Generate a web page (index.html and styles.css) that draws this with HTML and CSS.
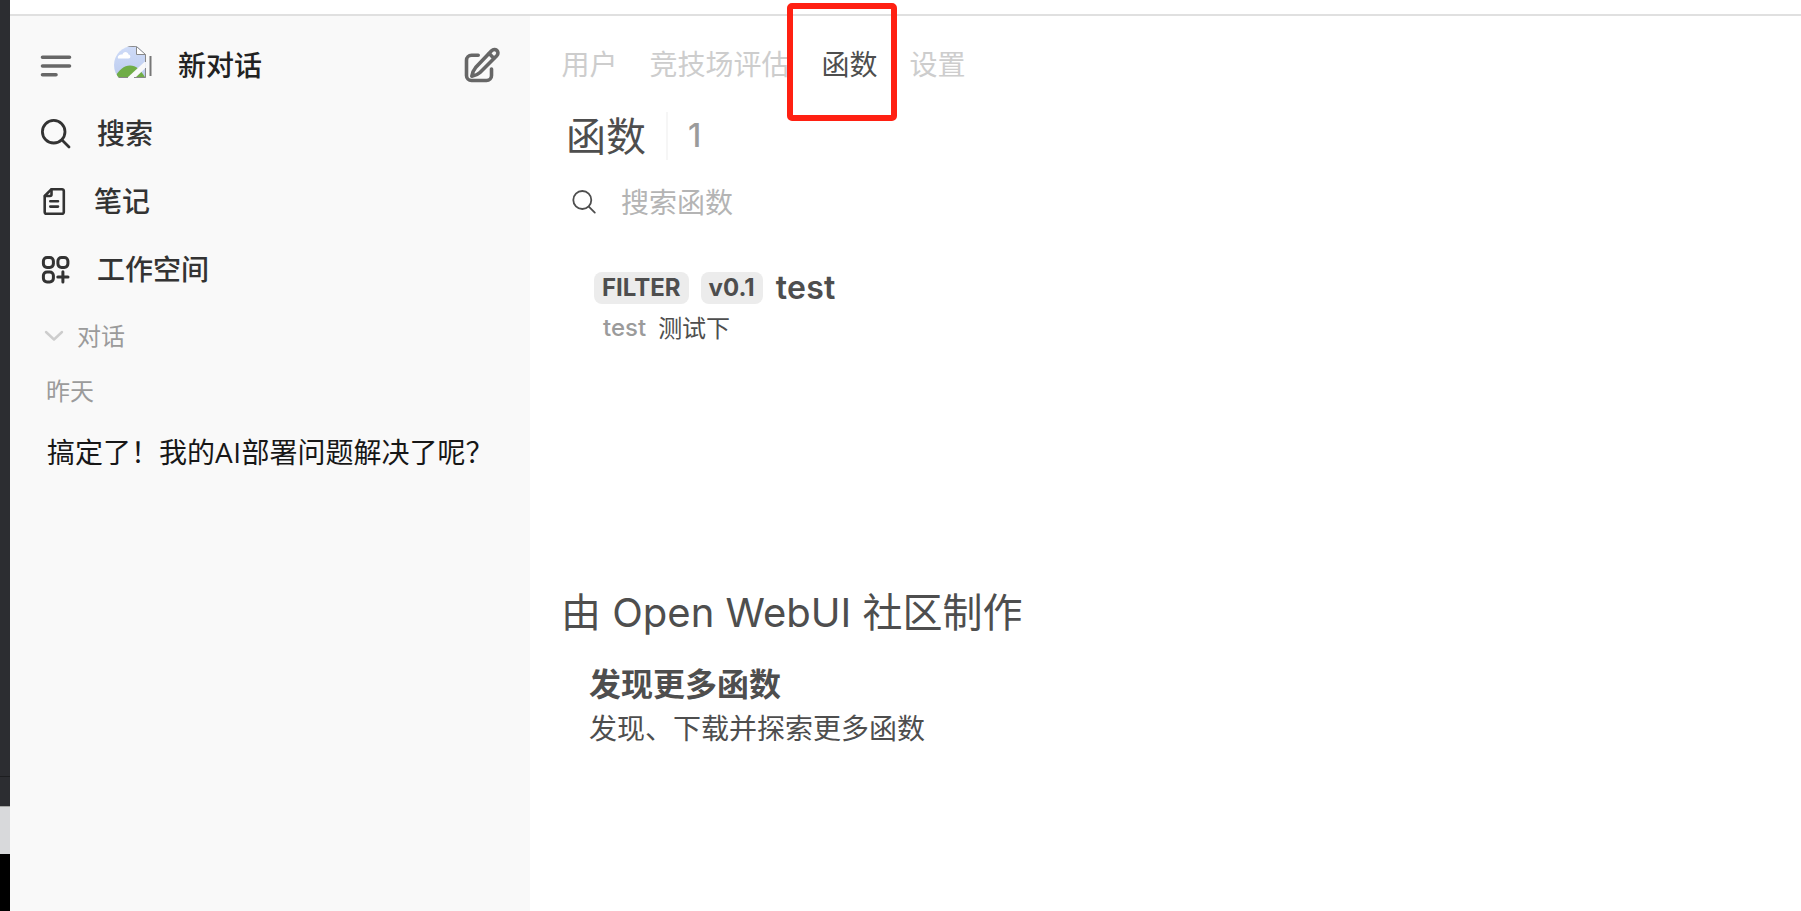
FILE: index.html
```html
<!DOCTYPE html>
<html lang="zh-CN">

<head>
    <meta charset="UTF-8">
    <meta name="viewport" content="width=device-width, initial-scale=1.0">
    <title>函数</title>
    <link rel="stylesheet" href="styles.css">
</head>

<body>
    <div class="edge">
        <div class="edge-dark"></div>
        <div class="edge-dark edge-dark-bottom"></div>
        <div class="edge-light"></div>
    </div>

    <div class="window">
        <div class="topbar"></div>
        <div class="app">
            <!-- Sidebar -->
            <aside class="sidebar">
                <div class="sidebar-header">
                    <svg class="icon-menu" width="32" height="24" viewBox="0 0 32 24" fill="none" stroke="currentColor" stroke-width="3.6" stroke-linecap="round">
                        <path d="M2.5 3.3H29.5M2.5 12H29.5M2.5 20.7H16" />
                    </svg>
                    <svg class="avatar" width="38" height="38" viewBox="0 0 38 38">
                        <defs>
                            <clipPath id="round"><circle cx="19" cy="19" r="19" /></clipPath>
                            <linearGradient id="sky" x1="0" y1="0" x2="0" y2="1">
                                <stop offset="0" stop-color="#cfdcf8" />
                                <stop offset="1" stop-color="#bccbee" />
                            </linearGradient>
                        </defs>
                        <g clip-path="url(#round)">
                            <path d="M0 0H23L31.5 8.5V32H0Z" fill="url(#sky)" />
                            <path d="M4 12.5C3 9 7 8 8.5 8.5C9 5 14 5 14.5 8.5C17 9 17 12.500 14.5 12.5Z" fill="#fff" />
                            <path d="M0 32C5 24 10 19.5 16 19.5C22 19.5 27 24 31.5 32Z" fill="#70ad47" />
                            <path d="M13 32L31.5 15V22L21 32Z" fill="#f9f9f9" />
                            <path d="M22.5 .5V8.5H31.5Z" fill="#fff" stroke="#888" />
                            <path d="M0 .5H22.5M31.5 8.5V16M31.5 22V31.5H20M0 31.5H14" fill="none" stroke="#888" />
                        </g>
                        <path d="M36.500 10V30" stroke="#777" stroke-width="2" />
                    </svg>
                    <span class="new-chat">新对话</span>
                    <svg class="icon-edit" width="37" height="37" viewBox="0 0 37 37" fill="none" stroke="currentColor" stroke-width="3.6" stroke-linecap="round" stroke-linejoin="round">
                        <path d="M14.2 8.2H7.5A5 5 0 0 0 2.5 13.2V28.5A5 5 0 0 0 7.5 33.5H22.5A5 5 0 0 0 27.5 28.5V22" />
                        <path d="M27.8 3.6A3.3 3.3 0 0 1 33 8.4L16 25.4C13.5 27.8 10.5 28.6 7.8 29.2C8.3 26.2 9.3 23.2 11.6 20.6Z" />
                        <path d="M25.2 6.6L29.8 11.2" />
                    </svg>
                </div>

                <nav class="menu">
                    <a class="menu-item">
                        <svg width="32" height="32" viewBox="0 0 32 32" fill="none" stroke="currentColor" stroke-width="2.8" stroke-linecap="round">
                            <circle cx="13.7" cy="13.7" r="11.3" />
                            <path d="M22 22L29 29" />
                        </svg>
                        <span>搜索</span>
                    </a>
                    <a class="menu-item menu-item-notes">
                        <svg width="32" height="32" viewBox="0 0 32 32" fill="none" stroke="currentColor" stroke-width="2.6" stroke-linecap="round" stroke-linejoin="round">
                            <path d="M11.500 3.200H22A1.800 1.800 0 0 1 23.8 5V26A1.8 1.8 0 0 1 22 27.8H6.5A1.8 1.8 0 0 1 4.700 26V10Z" />
                            <path d="M11.5 3.5V8.5A1.5 1.5 0 0 1 10 10H5M10.3 15.3H18M10.3 20.6H18" />
                        </svg>
                        <span>笔记</span>
                    </a>
                    <a class="menu-item">
                        <svg width="32" height="32" viewBox="0 0 32 32" fill="none" stroke="currentColor" stroke-width="3" stroke-linecap="round">
                            <rect x="3.4" y="3.4" width="10" height="10" rx="3.6" />
                            <rect x="17.9" y="3.4" width="10" height="10" rx="3.6" />
                            <rect x="3.4" y="17.9" width="10" height="10" rx="3.6" />
                            <path d="M22.9 17.7V28M17.8 22.9H28" />
                        </svg>
                        <span>工作空间</span>
                    </a>
                </nav>

                <div class="folder">
                    <svg width="20" height="14" viewBox="0 0 20 14" fill="none" stroke="currentColor" stroke-width="2.4" stroke-linecap="round" stroke-linejoin="round">
                        <path d="M2 3L10 10.5L18 3" />
                    </svg>
                    <span>对话</span>
                </div>
                <div class="date">昨天</div>
                <a class="chat">搞定了！我的<span class="latin">AI</span>部署问题解决了呢？</a>
            </aside>

            <!-- Admin content -->
            <main class="content">
                <nav class="tabs">
                    <a>用户</a>
                    <a>竞技场评估</a>
                    <a class="active">函数</a>
                    <a>设置</a>
                </nav>

                <div class="title">
                    <h1>函数</h1>
                    <span class="count">1</span>
                </div>

                <div class="search">
                    <svg width="26" height="26" viewBox="0 0 26 26" fill="none" stroke="currentColor" stroke-width="1.8" stroke-linecap="round">
                        <circle cx="11.300" cy="11" r="9" />
                        <path d="M17.8 17.6L23.8 23.6" />
                    </svg>
                    <span>搜索函数</span>
                </div>

                <div class="function">
                    <div class="function-name">
                        <span class="badge">FILTER</span>
                        <span class="badge">v0.1</span>
                        <strong>test</strong>
                    </div>
                    <div class="function-info">
                        <span class="function-id">test</span>
                        <span>测试下</span>
                    </div>
                </div>

                <section class="community">
                    <h2>由 Open WebUI 社区制作</h2>
                    <div class="discover">
                        <h3>发现更多函数</h3>
                        <p>发现、下载并探索更多函数</p>
                    </div>
                </section>
            </main>
        </div>
    </div>

    <div class="highlight"></div>
</body>

</html>
```

FILE: styles.css
```css
* {
    box-sizing: border-box;
}

body {
    display: flex;
    height: 100vh;
    margin: 0;
    overflow: hidden;
    background-color: #fff;
    font-family: Inter, "Noto Sans CJK SC", sans-serif;
    font-size: 28px;
    color: #4e4e4e;
}

h1,
h2,
h3,
p {
    margin: 0;
    font-weight: 400;
}

svg {
    display: block;
    flex-shrink: 0;
}

/* Strip of the desktop left of the window */
.edge {
    width: 10px;
    background-color: #000;
}

.edge-dark {
    height: 776px;
    background-color: #2c2d31;
}

.edge-dark-bottom {
    height: 30px;
    border-top: 1px solid #1d1e20;
}

.edge-light {
    height: 48px;
    background-color: #d8d9db;
    border-top: 1px solid #a5a6a4;
}

.window {
    flex: 1;
    display: flex;
    flex-direction: column;
}

.topbar {
    height: 16px;
    border-bottom: 2px solid #e0e0e0;
}

.app {
    flex: 1;
    display: flex;
}

/* Sidebar */
.sidebar {
    width: 520px;
    padding: 15px 29px 0 30px;
    background-color: #f9f9f9;
    color: #333;
}

.sidebar-header {
    display: flex;
    align-items: center;
    height: 68px;
    color: #676767;
}

.icon-menu {
    margin-top: 2px;
}

.avatar {
    margin-left: 42px;
}

.new-chat {
    margin-left: 26px;
    padding-bottom: 3px;
    font-weight: 500;
    color: #222;
}

.icon-edit {
    margin-left: auto;
}

.menu-item {
    display: flex;
    align-items: center;
    gap: 25px;
    height: 68px;
    font-weight: 500;
}

.menu-item svg {
    margin-top: 2px;
}

.menu-item span {
    padding-bottom: 2px;
}

.menu-item-notes {
    gap: 22px;
}

.folder {
    display: flex;
    align-items: center;
    gap: 13px;
    height: 66px;
    padding-left: 4px;
    font-size: 24px;
    color: #9b9b9b;
}

.folder svg {
    color: #cdcdcd;
}

.folder span {
    padding-bottom: 3px;
}

.date {
    height: 46px;
    padding-left: 6px;
    font-size: 24px;
    line-height: 46px;
    color: #9b9b9b;
}

.chat {
    display: block;
    height: 74px;
    padding-left: 7px;
    line-height: 74px;
    white-space: nowrap;
    color: #171717;
}

.latin {
    font-family: "Open Sans", sans-serif;
    letter-spacing: 0.5px;
}

/* Content */
.content {
    flex: 1;
    padding: 15px 32px 0;
}

.tabs {
    display: flex;
    align-items: center;
    gap: 32px;
    height: 68px;
    padding-bottom: 4px;
    color: #cdcdcd;
}

.tabs a {
    position: relative;
    left: -0.5px;
}

.tabs .active {
    color: #4e4e4e;
}

.title {
    display: flex;
    align-items: center;
    height: 74px;
    padding-left: 4px;
}

.title h1 {
    padding-bottom: 4px;
    font-size: 40px;
}

.count {
    height: 48px;
    margin-left: 20px;
    padding-left: 20px;
    border-left: 2px solid #f6f6f6;
    font-size: 32px;
    font-weight: 500;
    line-height: 48px;
    color: #9b9b9b;
}

.search {
    display: flex;
    align-items: center;
    gap: 24px;
    height: 58px;
    padding-left: 9px;
}

.search span {
    padding-bottom: 3px;
    color: #b4b4b4;
}

.function {
    padding: 38px 0 0 32px;
}

.function-name {
    display: flex;
    align-items: center;
    gap: 12px;
    height: 37px;
}

.badge {
    height: 32px;
    padding: 0 8px;
    border-radius: 8px;
    background-color: #ececec;
    font-size: 24px;
    font-weight: 700;
    line-height: 32px;
}

.function-name strong {
    margin-left: 1px;
    font-size: 32px;
    font-weight: 600;
    letter-spacing: 0.3px;
}

.function-info {
    display: flex;
    align-items: center;
    gap: 12px;
    height: 40px;
    padding-left: 9px;
    font-size: 24px;
}

.function-id {
    padding-top: 2px;
    font-weight: 500;
    color: #9b9b9b;
}

.community {
    padding-top: 237px;
}

.community h2 {
    height: 60px;
    margin-left: -1px;
    font-size: 40px;
    line-height: 60px;
}

.discover {
    padding: 18px 0 0 27px;
}

.discover h3 {
    height: 48px;
    font-size: 32px;
    font-weight: 700;
    line-height: 48px;
}

.discover p {
    height: 40px;
    line-height: 40px;
}

/* Red marker over the active tab */
.highlight {
    position: absolute;
    top: 3px;
    left: 787px;
    width: 110px;
    height: 118px;
    border: 6px solid #ff2012;
    border-radius: 5px;
}
```
